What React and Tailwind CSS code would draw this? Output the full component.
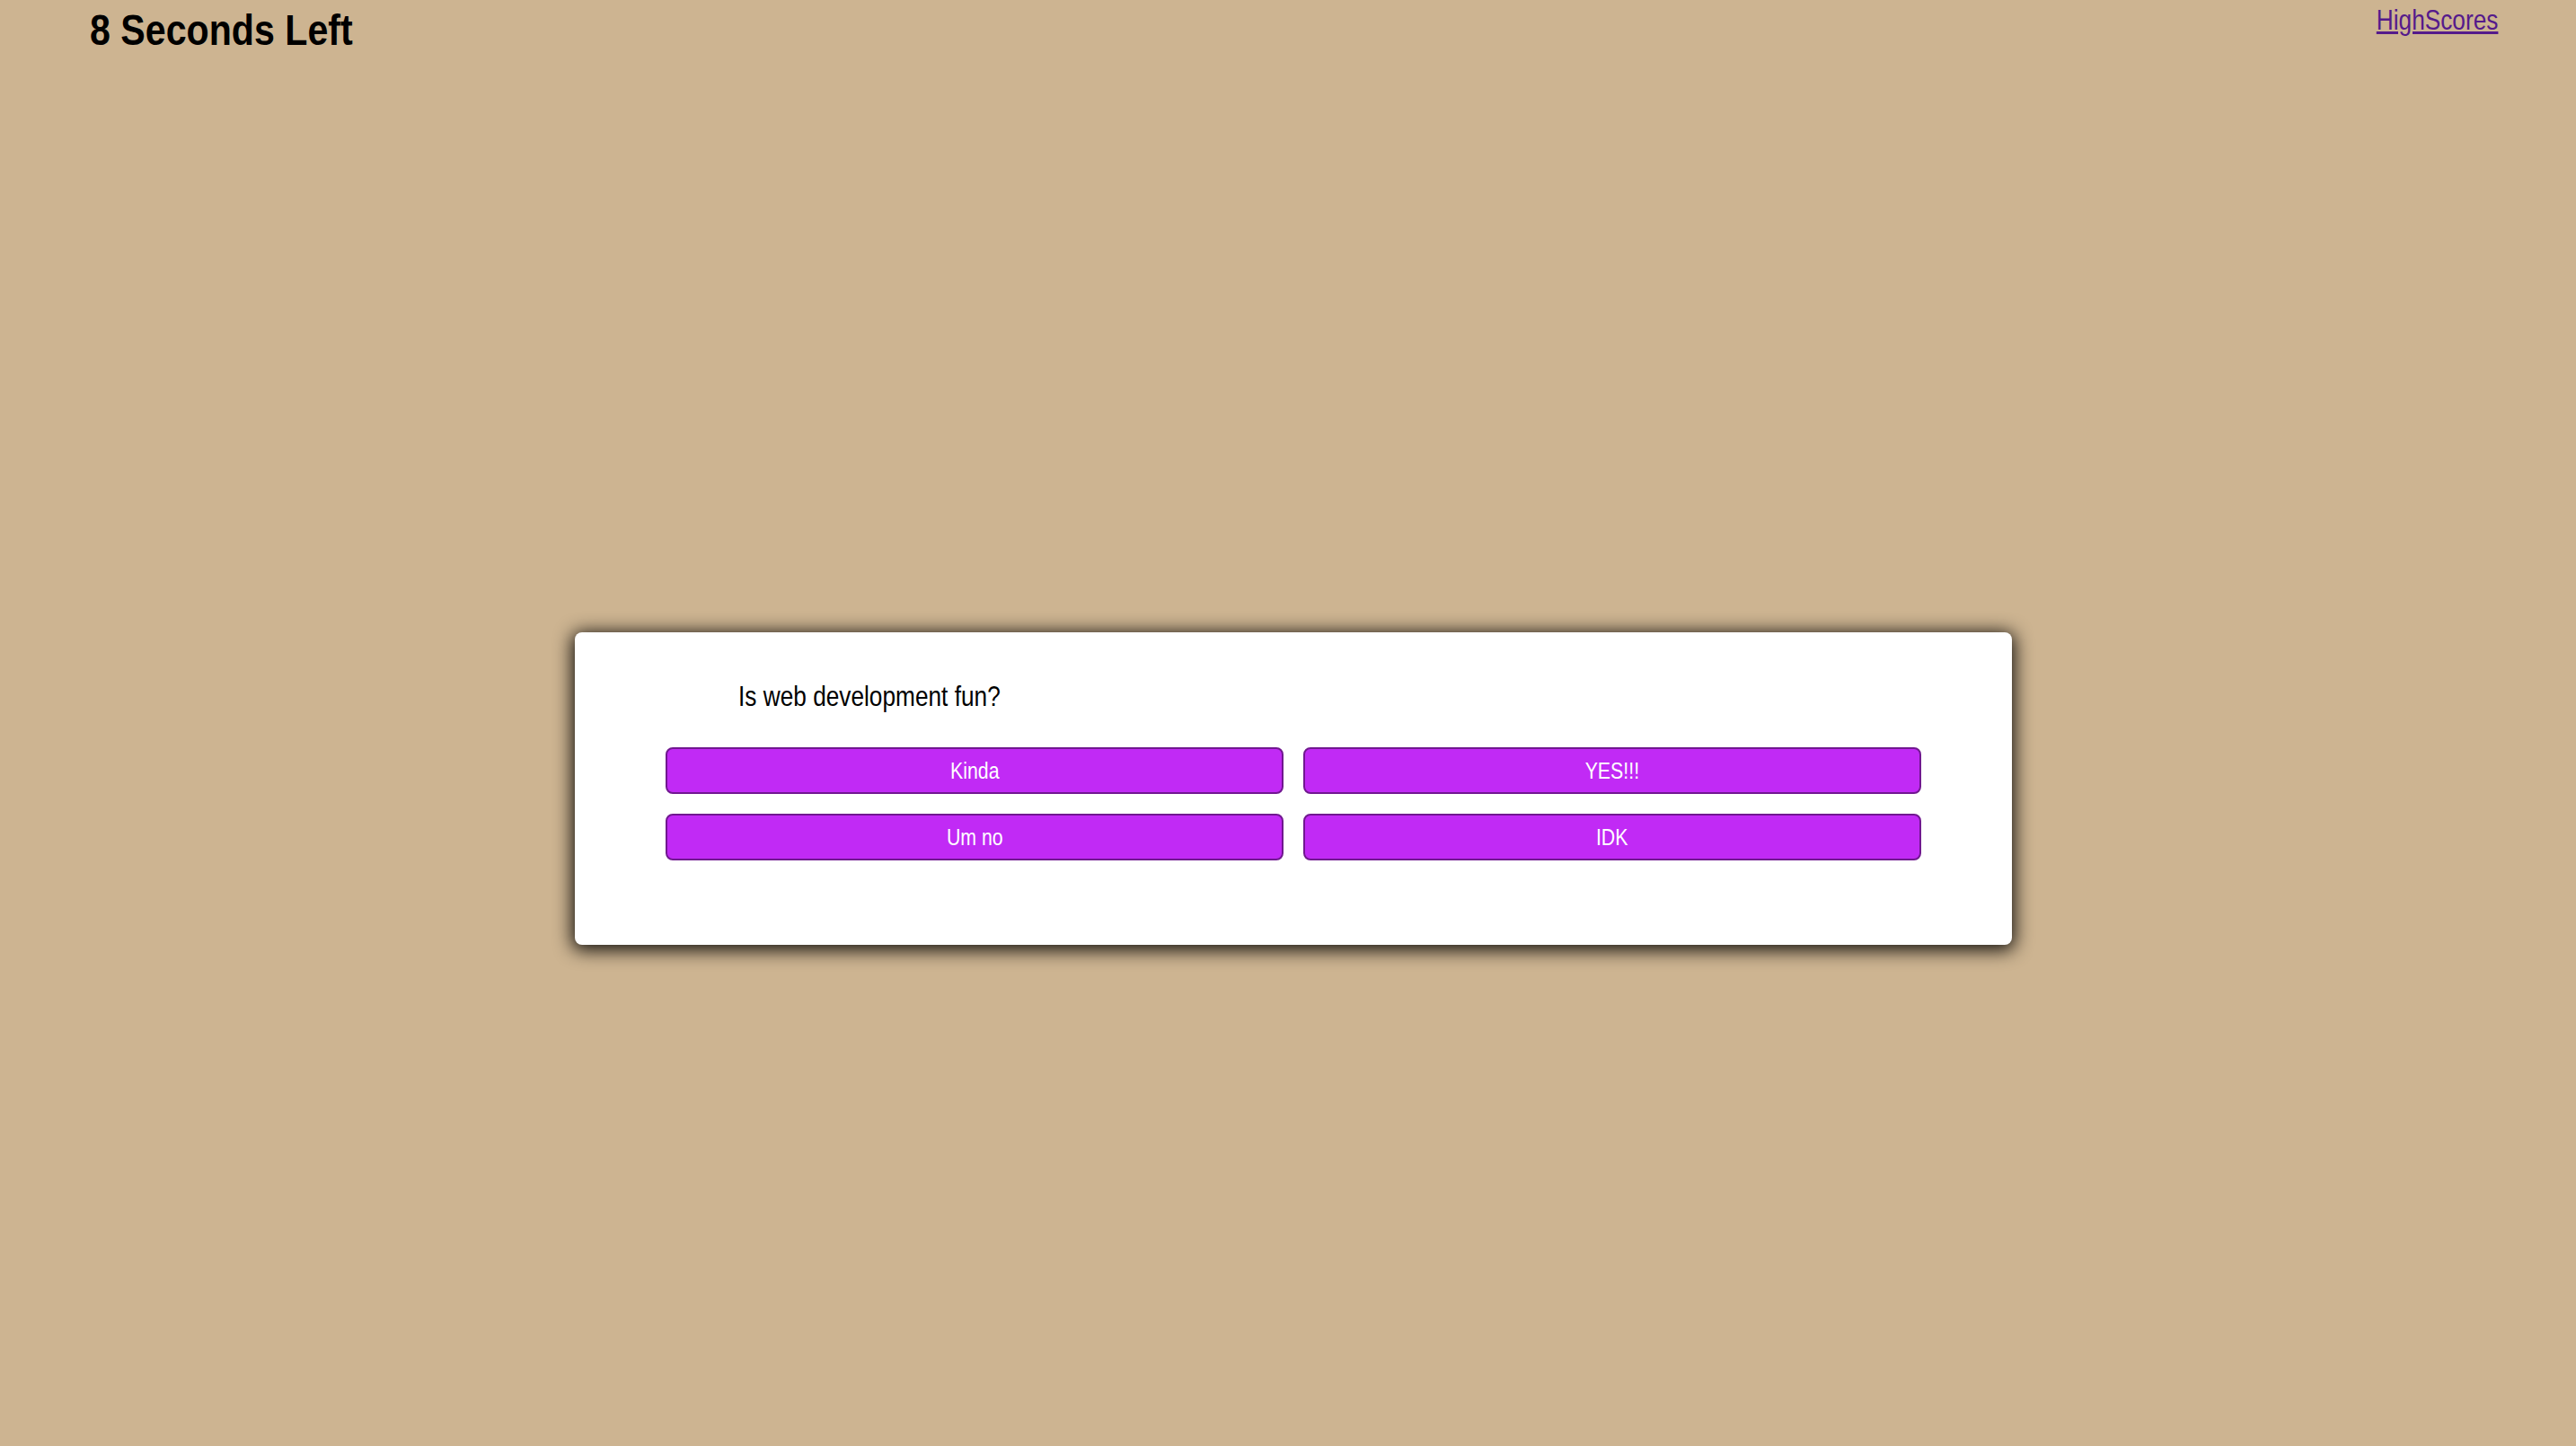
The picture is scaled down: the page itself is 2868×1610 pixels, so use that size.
import { useState } from "react";

const ANSWERS = ["Kinda", "YES!!!", "Um no", "IDK"];

export default function App() {
  const [secondsLeft] = useState(8);

  return (
    <div className="min-h-screen bg-[#cdb491] font-['Liberation_Sans',Arial,sans-serif]">
      {/* header */}
      <header className="flex items-start justify-between pl-[100px] pr-[87px]">
        <h1 className="mt-[5px] origin-left scale-x-[0.84] text-[49px] font-bold leading-[56px] text-black">
          {secondsLeft} Seconds Left
        </h1>
        <a
          href="#highscores"
          className="mt-[4px] origin-right scale-x-[0.82] text-[32px] leading-[37px] text-[#551a8b] underline"
        >
          HighScores
        </a>
      </header>

      {/* quiz card */}
      <main className="mt-[643px] flex justify-center pl-3">
        <div className="w-[1600px] rounded-[8px] bg-white pt-[53px] pb-[94px] shadow-[0_3px_20px_3px_rgba(0,0,0,0.9)]">
          <h2 className="mb-[38px] ml-[182px] origin-left scale-x-[0.82] text-[32px] leading-[37px] text-black">
            Is web development fun?
          </h2>
          <div className="grid grid-cols-2 gap-[22px] px-[101px]">
            {ANSWERS.map((answer) => (
              <button
                key={answer}
                className="h-[52px] rounded-[8px] border-2 border-[#711890] bg-[#c12af5] text-[26px] leading-[30px] text-white"
              >
                <span className="inline-block scale-x-[0.82]">{answer}</span>
              </button>
            ))}
          </div>
        </div>
      </main>
    </div>
  );
}
